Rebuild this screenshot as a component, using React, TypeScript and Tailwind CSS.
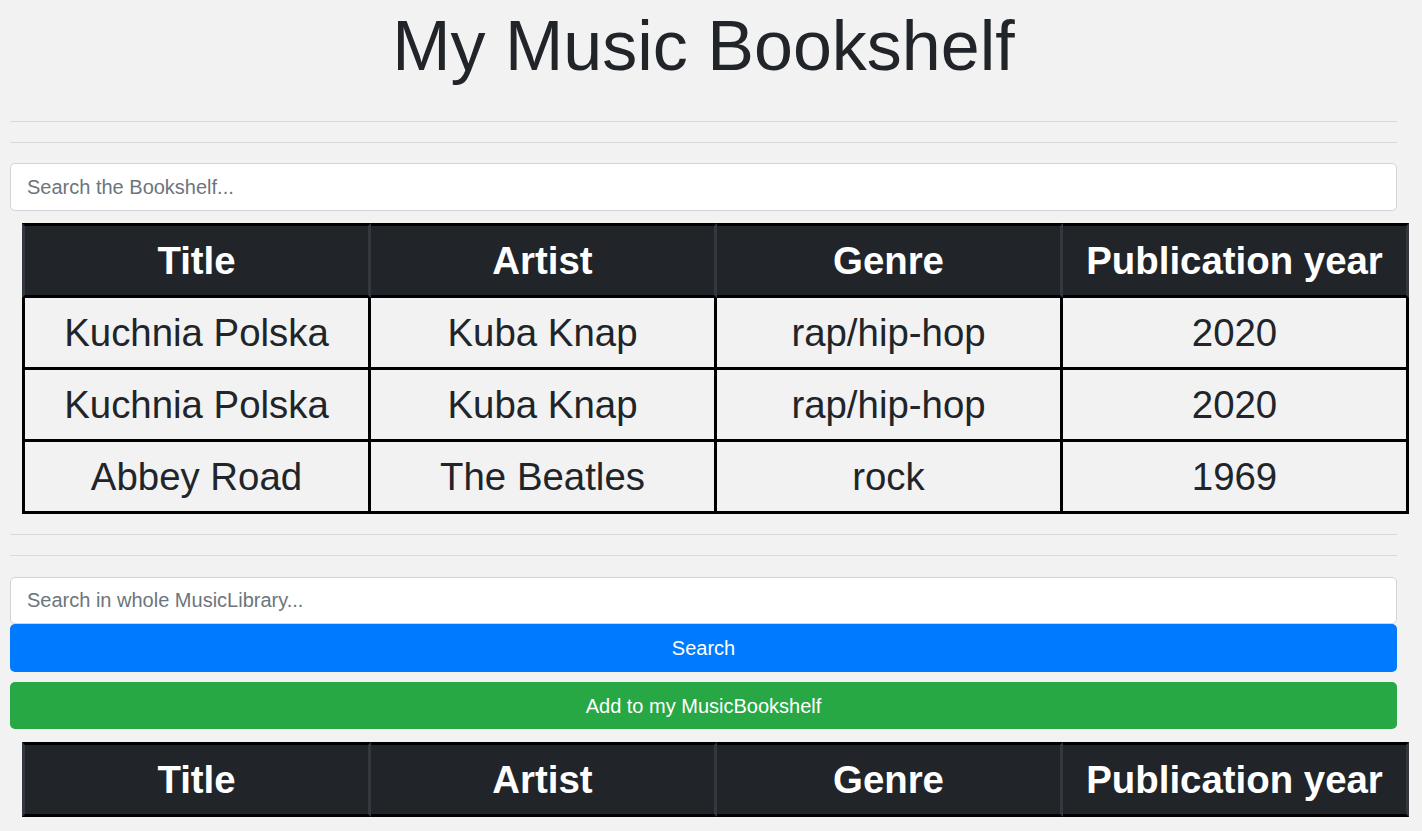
import React from "react";

type Row = { title: string; artist: string; genre: string; year: string };

const rows: Row[] = [
  { title: "Kuchnia Polska", artist: "Kuba Knap", genre: "rap/hip-hop", year: "2020" },
  { title: "Kuchnia Polska", artist: "Kuba Knap", genre: "rap/hip-hop", year: "2020" },
  { title: "Abbey Road", artist: "The Beatles", genre: "rock", year: "1969" },
];

const headers = ["Title", "Artist", "Genre", "Publication year"];

function MusicTable({ data }: { data: Row[] }) {
  return (
    <table
      className="ml-[12px] w-[1387px] table-fixed text-center text-[38.4px]"
      style={{ borderCollapse: "separate", borderSpacing: 0 }}
    >
      <colgroup>
        <col className="w-[349px]" />
        <col className="w-[346px]" />
        <col className="w-[346px]" />
        <col className="w-[346px]" />
      </colgroup>
      <thead>
        <tr>
          {headers.map((h, i) => (
            <th
              key={h}
              className={
                "bg-[#212529] text-white font-bold py-3 leading-[45px] whitespace-nowrap border-t-[3px] border-b-[3px] border-r-[3px] border-t-black border-b-black border-r-[#32383e] " +
                (i === 0 ? "border-l-[3px] border-l-[#32383e]" : "")
              }
            >
              {h}
            </th>
          ))}
        </tr>
      </thead>
      <tbody>
        {data.map((r, idx) => (
          <tr key={idx}>
            {[r.title, r.artist, r.genre, r.year].map((v, i) => (
              <td
                key={i}
                className={
                  "text-[#212529] font-normal py-3 leading-[45px] whitespace-nowrap border-b-[3px] border-r-[3px] border-black " +
                  (i === 0 ? "border-l-[3px]" : "")
                }
              >
                {v}
              </td>
            ))}
          </tr>
        ))}
      </tbody>
    </table>
  );
}

export default function App() {
  return (
    <div
      className="min-h-[831px] bg-[#f2f2f2] text-[#212529]"
      style={{ fontFamily: '"Liberation Sans", Arial, sans-serif' }}
    >
      <div className="ml-[10px] w-[1387px] pt-[4px]">
        <h1 className="text-center text-[70px] font-normal leading-[84px] text-[#212529]">
          My Music Bookshelf
        </h1>
        <div className="mt-[33px] h-px bg-[#dadada]" />
        <div className="mt-[20px] h-px bg-[#dadada]" />
        <input
          type="text"
          placeholder="Search the Bookshelf..."
          className="mt-[20px] block h-[48px] w-full rounded-[5px] border border-[#ced4da] bg-white px-4 text-[20px] text-[#495057] outline-none placeholder:text-[#6c757d]"
        />
        <div className="mt-[12px]">
          <MusicTable data={rows} />
        </div>
        <div className="mt-[20px] h-px bg-[#dadada]" />
        <div className="mt-[20px] h-px bg-[#dadada]" />
        <input
          type="text"
          placeholder="Search in whole MusicLibrary..."
          className="mt-[21px] block h-[47px] w-full rounded-[5px] border border-[#ced4da] bg-white px-4 text-[20px] text-[#495057] outline-none placeholder:text-[#6c757d]"
        />
        <button className="block h-[48px] w-full rounded-[5px] bg-[#007bff] text-[20px] leading-[30px] text-white">
          Search
        </button>
        <button className="mt-[10px] block h-[47px] w-full rounded-[5px] bg-[#28a745] text-[20px] leading-[30px] text-white">
          Add to my MusicBookshelf
        </button>
        <div className="mt-[13px]">
          <MusicTable data={[]} />
        </div>
      </div>
    </div>
  );
}
